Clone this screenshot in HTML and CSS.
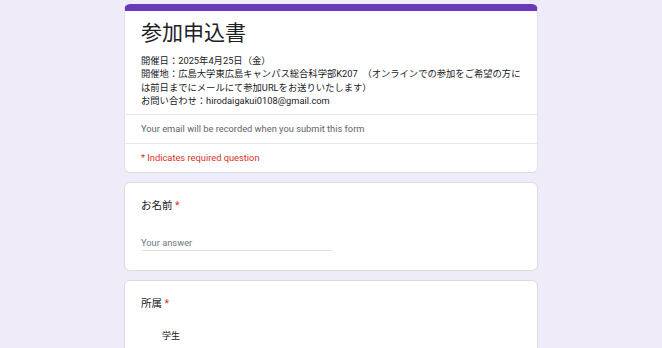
FILE: index.html
```html
<!DOCTYPE html>
<html lang="ja">
<head>
  <meta charset="UTF-8" />
  <meta name="viewport" content="width=device-width, initial-scale=1.0" />
  <title>参加申込書</title>
  <link rel="stylesheet" href="styles.css">
</head>
<body>
  <div class="form">
    <div class="card header">
      <div class="intro">
        <h1>参加申込書</h1>
        <div class="desc">
          <p>開催日：2025年4月25日（金）</p>
          <p>開催地：広島大学東広島キャンパス総合科学部K207　（オンラインでの参加をご希望の方には前日までにメールにて参加URLをお送りいたします）</p>
          <p>お問い合わせ：hirodaigakui0108@gmail.com</p>
        </div>
      </div>
      <div class="row note">Your email will be recorded when you submit this form</div>
      <div class="row required">* Indicates required question</div>
    </div>

    <div class="card question">
      <div class="q-title">お名前 <span class="star">*</span></div>
      <div class="answer">Your answer</div>
    </div>

    <div class="card question">
      <div class="q-title">所属 <span class="star">*</span></div>
      <div class="option">学生</div>
    </div>
  </div>
</body>
</html>
```

FILE: styles.css
```css
body {
  margin: 0;
  background: #f0ebf8;
  font-family: Roboto, "Noto Sans CJK JP", sans-serif;
  color: #202124;
}
.form {
  width: 414px;
  margin: 0 auto;
  padding-top: 4px;
  display: flex;
  flex-direction: column;
  gap: 9px;
}
.card {
  background: #fff;
  border: 1px solid #dadce0;
  border-radius: 6px;
}
.header {
  border-top: 7px solid #673ab7;
  border-left-color: #e6e1ee;
  border-right-color: #e6e1ee;
}
.intro {
  padding: 8px 16px 7px;
  border-bottom: 1px solid #e8e8ea;
}
h1 {
  margin: 0 0 7px;
  font-size: 21px;
  line-height: 28px;
  font-weight: 400;
}
.desc p {
  margin: 0;
  font-size: 9.3px;
  line-height: 13.3px;
}
.row {
  padding: 0 16px;
  font-size: 9.3px;
  line-height: 28px;
}
.note {
  color: #5f6368;
  border-bottom: 1px solid #e8e8ea;
}
.required {
  color: #d93025;
}
.question {
  padding: 15px 16px 19px;
}
.q-title {
  font-size: 10.5px;
  line-height: 16px;
}
.star {
  color: #d93025;
}
.answer {
  margin-top: 21px;
  width: 191px;
  font-size: 9.3px;
  line-height: 15px;
  color: #70757a;
  border-bottom: 1px solid #e3e3e3;
}
.option {
  margin-top: 17px;
  padding-left: 21px;
  font-size: 9px;
  line-height: 14px;
}
```
